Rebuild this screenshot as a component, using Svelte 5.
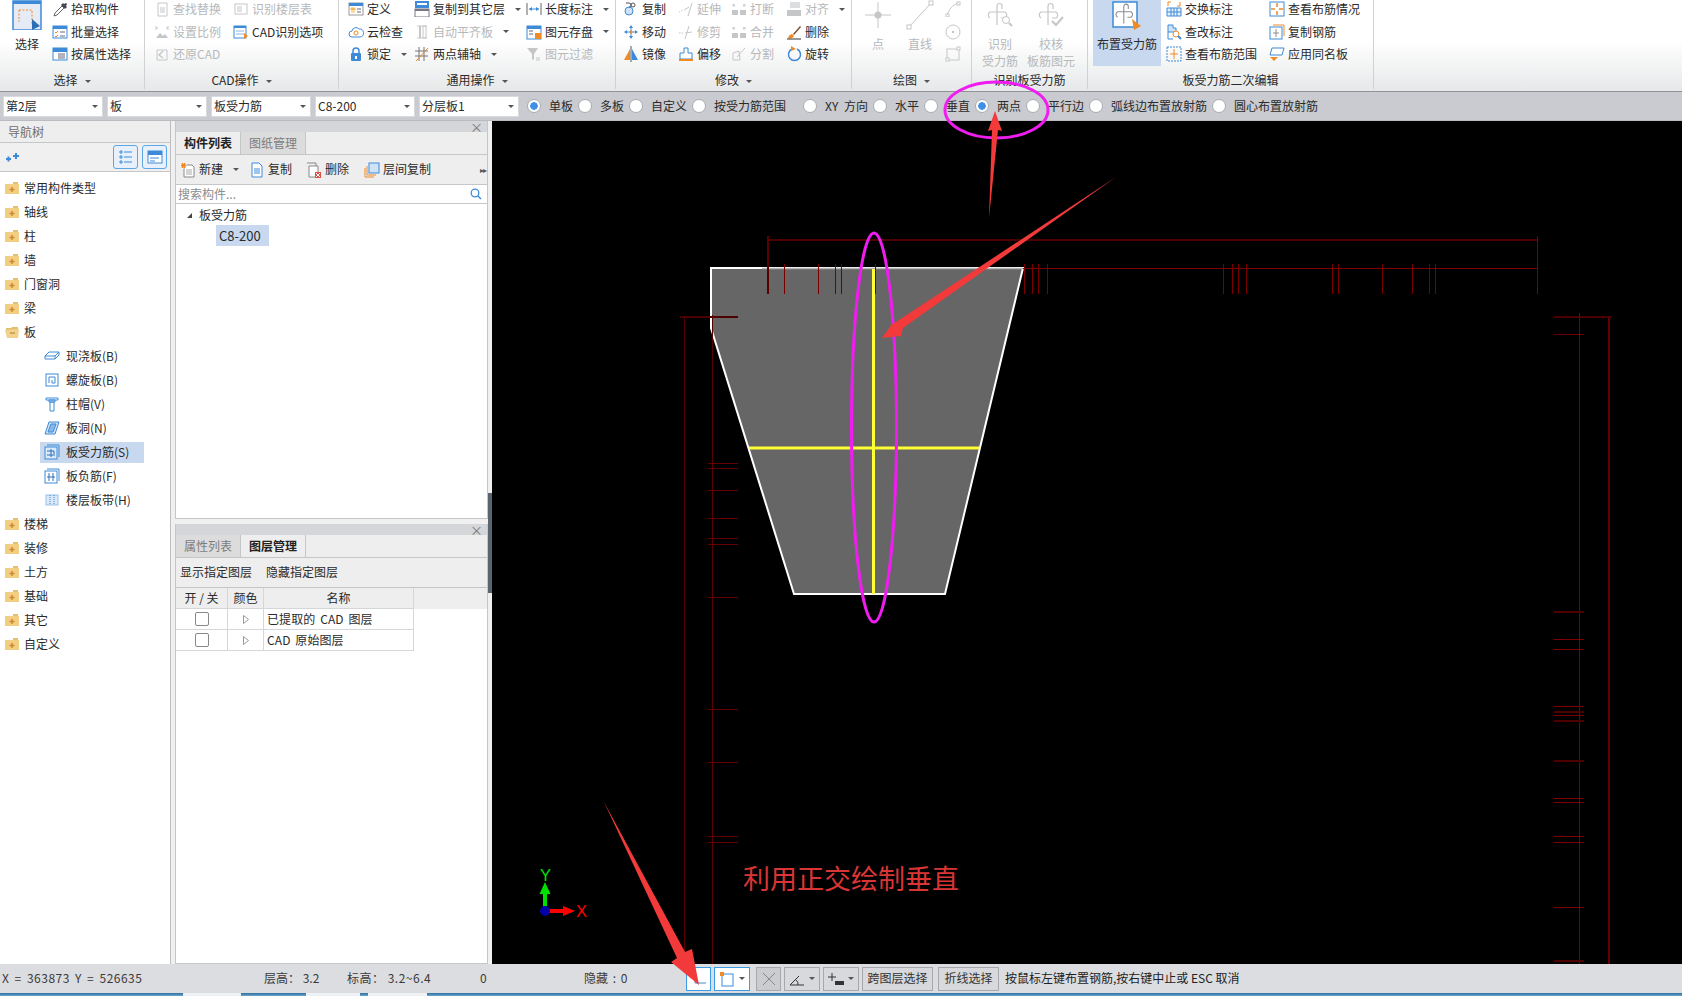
<script>
	// small ribbon / panel icons, all on a 16x16 box unless the caller sizes them up
	const blue = '#3d8bd8';
	const org = '#f08a24';
	const dis = '#c4c6c8';
	const rebarCross = (c) =>
		`<path d="M12 25V6a2.500 2.500 0 0 1 5 0v3M5 18a3.500 3.500 0 0 1 0-6h15a3.500 3.500 0 0 1 0 6h-4" fill="none" stroke="${c}" stroke-width="1.200"/>`;
	const icons = {
		select: `<rect x="1" y="1" width="28" height="29" fill="#e6ebf5" stroke="${blue}" stroke-width="1.5"/><rect x="1" y="1" width="28" height="3" fill="${blue}"/><path d="M7 10h13v14M7 10v12" fill="none" stroke="${org}" stroke-dasharray="2 1.5"/><path d="M20 19l8 7-8 4z" fill="#2d6fb5"/>`,
		pick: `<path d="M2 15l1-3 7-7 2 2-7 7z" fill="#fff" stroke="#666"/><path d="M9 4l2-2 1 1 2-1 1 1-1 2 1 1-2 2z" fill="#445"/>`,
		batch: `<rect x="1" y="2" width="14" height="12" fill="#fff" stroke="${blue}"/><rect x="1" y="2" width="14" height="3" fill="${blue}"/><path d="M3 8l1 1 2-2M3 12l1 1 2-2" fill="none" stroke="${org}"/><path d="M8 8h5M8 12h5" stroke="#667"/>`,
		attr: `<rect x="1" y="2" width="14" height="12" fill="#fff" stroke="${blue}"/><rect x="1" y="2" width="14" height="4" fill="${blue}"/><path d="M6 8h7M6 10h7M6 12h7" stroke="#667"/>`,
		find: `<path d="M4 2h9v13H4z" fill="none" stroke="${dis}"/><path d="M6 7h5M6 9h5M6 11h5" stroke="${dis}"/>`,
		scale: `<path d="M2 4h2M12 4h2M2 2v4M14 2v4" stroke="${dis}"/><path d="M2 14l4-5 3 3 2-2 3 4z" fill="${dis}"/>`,
		restore: `<path d="M3 4h10v10H3z" fill="none" stroke="${dis}"/><path d="M9 5L5 9l4 3" fill="none" stroke="${dis}" stroke-width="1.5"/>`,
		floor: `<rect x="2" y="3" width="12" height="10" fill="none" stroke="${dis}"/><path d="M4 6h5M4 8h5M4 10h5" stroke="${dis}"/>`,
		cadopt: `<rect x="1" y="2" width="12" height="12" fill="#fff" stroke="${blue}"/><rect x="1" y="2" width="12" height="2" fill="${blue}"/><path d="M3 7h8M3 10h8" stroke="#8ab4e0"/><path d="M11 9l4 3-4 3z" fill="${org}"/>`,
		define: `<rect x="1" y="2" width="14" height="12" fill="#fff" stroke="#999"/><rect x="1" y="2" width="14" height="3" fill="${blue}"/><path d="M3 7h4v2H3zM3 11h4" fill="#f4b85a" stroke="#f4b85a"/><path d="M9 8h4M9 11h4" stroke="#667"/>`,
		cloud: `<path d="M4 13a3 3 0 0 1 0-6 4 4 0 0 1 7-2 4 4 0 0 1 1 8z" fill="#fff" stroke="${blue}"/><circle cx="8" cy="9" r="2" fill="none" stroke="${org}"/>`,
		lock: `<path d="M5 7V5a3 3 0 0 1 6 0v2" fill="none" stroke="${blue}" stroke-width="1.5"/><rect x="3" y="7" width="10" height="8" rx="1" fill="${blue}"/><rect x="7" y="10" width="2" height="3" fill="#fff"/>`,
		copyto: `<rect x="1" y="0" width="14" height="7" fill="${blue}"/><rect x="3" y="2" width="10" height="2" fill="#fff"/><rect x="1" y="8" width="14" height="8" fill="#fff" stroke="#778"/><rect x="1" y="8" width="14" height="2" fill="#778"/>`,
		align: `<path d="M3 2h10M3 14h10" stroke="${dis}"/><rect x="5" y="2" width="2" height="12" fill="${dis}"/><rect x="9" y="2" width="3" height="12" fill="none" stroke="${dis}"/>`,
		axis: `<path d="M1 5h13M1 10h13M5 1v14M10 1v14" stroke="#777"/><path d="M2 15L14 2" stroke="${org}"/>`,
		dim: `<path d="M1 2v12M15 2v12" stroke="#666"/><path d="M3 8h10" stroke="${blue}"/><path d="M3 8l3-2v4zM13 8l-3-2v4z" fill="${blue}"/>`,
		save: `<rect x="1" y="2" width="14" height="13" fill="#fff" stroke="${blue}"/><rect x="1" y="2" width="14" height="3" fill="${blue}"/><path d="M3 7h4M3 10h4" stroke="#667"/><rect x="9" y="9" width="6" height="6" fill="${org}"/>`,
		filter: `<path d="M1 2h11L8 8v6l-2-1V8z" fill="${dis}"/><path d="M10 12h4M10 14h4" stroke="${dis}"/>`,
		copy: `<circle cx="6" cy="10" r="4" fill="#cfe2f6" stroke="${blue}"/><path d="M3 2h3a2 2 0 0 1 0 4" fill="none" stroke="#555"/><circle cx="10" cy="4" r="2" fill="none" stroke="#555"/>`,
		move: `<path d="M8 1l2 3H6zM8 15l2-3H6zM1 8l3-2v4zM15 8l-3-2v4z" fill="${blue}"/><path d="M8 3v10M3 8h10" stroke="${blue}"/><circle cx="8" cy="8" r="1.5" fill="${org}"/>`,
		mirror: `<path d="M7 3v11H1z" fill="${org}"/><path d="M9 3v11h6z" fill="${blue}"/><path d="M8 0v16" stroke="#555"/>`,
		offset: `<path d="M6 2h4v5h4v6H2V7h4z" fill="#fff" stroke="${blue}"/><path d="M1 14h14" stroke="${org}" stroke-width="2"/>`,
		extend: `<path d="M1 11l4-2" stroke="${dis}" stroke-dasharray="1 1"/><path d="M6 9l5-3M14 2L10 15" stroke="${dis}"/>`,
		trim: `<path d="M1 9h5" stroke="${dis}" stroke-dasharray="1.5 1"/><path d="M7 9l7-1M11 2L7 15" stroke="${dis}"/>`,
		split: `<path d="M3 3v3M13 3v3M1 4h3M12 4h3" stroke="${dis}"/><rect x="1" y="9" width="6" height="5" fill="${dis}"/><rect x="9" y="9" width="6" height="5" fill="${dis}"/>`,
		cut: `<path d="M2 14V7l6-2 1 9z" fill="none" stroke="${dis}"/><path d="M6 11l8-9" stroke="${dis}"/>`,
		alignr: `<rect x="4" y="1" width="10" height="6" fill="${dis}" opacity=".6"/><rect x="1" y="9" width="14" height="6" fill="${dis}"/>`,
		erase: `<path d="M2 14c1-3 3-4 4-4l2 2c-1 2-3 3-6 2z" fill="${org}"/><path d="M7 10l7-8 1 1-7 8z" fill="#7a4a22"/><path d="M1 15h14" stroke="#333"/>`,
		rotate: `<path d="M6 3a6 6 0 1 0 5 0" fill="none" stroke="${blue}" stroke-width="1.5"/><path d="M5 0l5 3-5 2z" fill="${org}"/>`,
		point: `<path d="M15 2v26M2 15h26" stroke="${dis}"/><circle cx="15" cy="15" r="3.5" fill="${dis}"/>`,
		line: `<path d="M4 27L26 3" stroke="${dis}"/><rect x="2" y="25" width="4" height="4" fill="#fff" stroke="${dis}"/><rect x="24" y="1" width="4" height="4" fill="#fff" stroke="${dis}"/>`,
		arc: `<path d="M2 15C4 8 7 4 14 2" fill="none" stroke="${dis}"/><rect x="1" y="13" width="3" height="3" fill="#fff" stroke="${dis}"/><rect x="12" y="1" width="3" height="3" fill="#fff" stroke="${dis}"/>`,
		circle: `<circle cx="8" cy="8" r="7" fill="none" stroke="${dis}"/><circle cx="8" cy="8" r="1.2" fill="${dis}"/>`,
		rect: `<rect x="2" y="3" width="12" height="11" fill="none" stroke="${dis}"/><rect x="12" y="1" width="3" height="3" fill="#fff" stroke="${dis}"/><rect x="1" y="12" width="3" height="3" fill="#fff" stroke="${dis}"/>`,
		identify: `${rebarCross(dis)}<circle cx="21" cy="20" r="3.500" fill="#fff" stroke="${dis}"/><path d="M24 23l3 3" stroke="${dis}" stroke-width="2"/>`,
		verify: `${rebarCross(dis)}<path d="M16 21l4 4 7-8" fill="none" stroke="${dis}" stroke-width="2"/>`,
		place: `<rect x="1" y="2" width="24" height="25" fill="#fff" stroke="${blue}" stroke-width="1.5"/><g transform="translate(1 1) scale(.9)">${rebarCross('#8a8f95')}</g><path d="M20 19l9 7-7 4z" fill="${org}"/>`,
		swap: `<path d="M1 7h14v8H1zM1 11h14M5 7v8M8 7v8M11 7v8" fill="#e6f0fb" stroke="${blue}"/><path d="M2 5V1h3M14 1v4h-3" fill="none" stroke="${org}"/>`,
		check: `<path d="M2 1h5v3h3v4H2z" fill="#cfe2f6" stroke="${blue}"/><path d="M2 8v7h5" fill="none" stroke="${blue}"/><circle cx="10" cy="10" r="3" fill="#fff" stroke="${org}"/><path d="M12 12l3 3" stroke="${blue}" stroke-width="2"/>`,
		range: `<rect x="1" y="1" width="14" height="14" fill="none" stroke="${blue}" stroke-dasharray="2 1"/><path d="M8 3v10M4 8h8" stroke="${org}"/>`,
		status: `<rect x="1" y="1" width="14" height="14" fill="#fff" stroke="${blue}"/><path d="M8 2v4M8 10v4M2 8h4M10 8h4" stroke="${org}" stroke-width="1.5"/>`,
		copybar: `<path d="M4 1h11v11" fill="none" stroke="${org}"/><rect x="1" y="3" width="12" height="12" fill="#fff" stroke="${blue}"/><path d="M7 5v8M4 9h6" stroke="#8a8f95"/>`,
		apply: `<path d="M3 2h12l-2 7H1z" fill="#fff" stroke="${blue}"/><path d="M1 11h8l-4 4z" fill="${org}"/>`,
		newdoc: `<path d="M4 3h8l2 2v10H4z" fill="#fff" stroke="#888"/><path d="M6 8h6M6 10h6M6 12h6" stroke="#aaa"/><rect x="1" y="1" width="5" height="5" fill="${org}" stroke="#fff" stroke-dasharray="1 1"/>`,
		copydoc: `<path d="M3 1h7l3 3v11H3z" fill="#fff" stroke="${blue}"/><path d="M5 7h6M5 9h6M5 11h6" stroke="${blue}"/>`,
		deldoc: `<path d="M1 1h9v3" fill="none" stroke="#888"/><path d="M3 4h9v11H3z" fill="#fff" stroke="#888"/><rect x="9" y="10" width="6" height="6" fill="#e05040"/><path d="M10 11l4 4M14 11l-4 4" stroke="#fff"/>`,
		floorcopy: `<path d="M1 6v9h9" fill="none" stroke="${org}"/><path d="M3 4v9h9" fill="none" stroke="${org}"/><rect x="5" y="1" width="10" height="10" fill="#cfe2f6" stroke="${blue}"/>`,
		slab: `<path d="M1 8l4-4h10v3l-4 4H1z" fill="#fff" stroke="${blue}"/><path d="M1 8h10l4-4M11 8v3" fill="none" stroke="${blue}"/>`,
		spiral: `<rect x="2" y="2" width="12" height="12" fill="#fff" stroke="${blue}"/><path d="M5 11V5h6v6H8V8" fill="none" stroke="${blue}"/>`,
		cap: `<path d="M2 2h12v2H2zM5 4h6v2H5zM6 6h4v9H6z" fill="#fff" stroke="${blue}"/>`,
		hole: `<path d="M5 2h10l-4 12H1z" fill="#cfe2f6" stroke="${blue}"/><path d="M7 4h5l-3 8H4z" fill="#8db8e6" stroke="${blue}"/>`,
		rebar: `<rect x="1" y="3" width="12" height="12" fill="#dbe9f8" stroke="${blue}"/><path d="M3 1h12v12" fill="none" stroke="${blue}"/><path d="M3 7h7v5M3 11h6M7 5v8" fill="none" stroke="#2d6fb5"/>`,
		neg: `<rect x="1" y="3" width="12" height="12" fill="#fff" stroke="${blue}"/><path d="M3 1h12v12" fill="none" stroke="${blue}"/><path d="M3 9h8M5 5v4M9 5v4M5 9v4M9 9v4" fill="none" stroke="#2d6fb5"/>`,
		band: `<rect x="2" y="3" width="12" height="10" fill="#dbe9f8" stroke="#9cc0e6"/><path d="M6 3v10M10 3v10" stroke="${blue}" stroke-dasharray="1 1"/>`,
		ortho: `<path d="M4 1v11h11" fill="none" stroke="${blue}"/>`,
		snap: `<rect x="3" y="3" width="11" height="12" fill="#fff" stroke="${blue}"/><rect x="1" y="1" width="4" height="4" fill="${org}"/>`,
		cross: `<path d="M2 2l12 12M14 2L2 14" stroke="#888"/>`,
		angle: `<path d="M1 14h14M1 14l9-9" stroke="#333"/><path d="M7 9a5 5 0 0 1 2 5" fill="none" stroke="#333"/>`,
		dash: `<path d="M4 2v8M0 6h8" stroke="#333"/><rect x="7" y="10" width="9" height="4" fill="#333"/>`
	};

	const S = (text, icon, extra = {}) => ({ text, icon, ...extra });
	const off = (text, icon, extra = {}) => ({ text, icon, disabled: true, ...extra });

	// every column is either a spacer, a stack of small items, or one big button
	const groups = [
		{
			label: '选择', w: 145, caret: true,
			cols: [
				{ w: 9 },
				{ w: 36, big: S(['选择'], 'select') },
				{ w: 7 },
				{ w: 92, items: [S('拾取构件', 'pick'), S('批量选择', 'batch'), S('按属性选择', 'attr')] }
			]
		},
		{
			label: 'CAD操作', w: 194, caret: true,
			cols: [
				{ w: 9 },
				{ w: 79, items: [off('查找替换', 'find'), off('设置比例', 'scale'), off('还原CAD', 'restore')] },
				{ w: 105, items: [off('识别楼层表', 'floor'), S('CAD识别选项', 'cadopt')] }
			]
		},
		{
			label: '通用操作', w: 277, caret: true,
			cols: [
				{ w: 9 },
				{ w: 66, items: [S('定义', 'define'), S('云检查', 'cloud'), S('锁定', 'lock', { caret: true })] },
				{
					w: 112,
					items: [
						S('复制到其它层', 'copyto', { caret: true }),
						off('自动平齐板', 'align', { caret: true }),
						S('两点辅轴', 'axis', { caret: true })
					]
				},
				{
					w: 89,
					items: [S('长度标注', 'dim', { caret: true }), S('图元存盘', 'save', { caret: true }), off('图元过滤', 'filter')]
				}
			]
		},
		{
			label: '修改', w: 236, caret: true,
			cols: [
				{ w: 7 },
				{ w: 55, items: [S('复制', 'copy'), S('移动', 'move'), S('镜像', 'mirror')] },
				{ w: 53, items: [off('延伸', 'extend'), off('修剪', 'trim'), S('偏移', 'offset')] },
				{ w: 55, items: [off('打断', 'split'), off('合并', 'split'), off('分割', 'cut')] },
				{ w: 65, items: [off('对齐', 'alignr', { caret: true }), S('删除', 'erase'), S('旋转', 'rotate')] }
			]
		},
		{
			label: '绘图', w: 120, caret: true,
			cols: [
				{ w: 11 },
				{ w: 30, big: off(['点'], 'point') },
				{ w: 12 },
				{ w: 30, big: off(['直线'], 'line') },
				{ w: 10 },
				{ w: 20, items: [off('', 'arc'), off('', 'circle'), off('', 'rect')] }
			]
		},
		{
			label: '识别板受力筋', w: 116,
			cols: [
				{ w: 8 },
				{ w: 40, big: off(['识别', '受力筋'], 'identify') },
				{ w: 7 },
				{ w: 48, big: off(['校核', '板筋图元'], 'verify') }
			]
		},
		{
			label: '板受力筋二次编辑', w: 286,
			cols: [
				{ w: 5 },
				{ w: 68, big: S(['布置受力筋'], 'place', { active: true }) },
				{ w: 5 },
				{ w: 103, items: [S('交换标注', 'swap'), S('查改标注', 'check'), S('查看布筋范围', 'range')] },
				{ w: 100, items: [S('查看布筋情况', 'status'), S('复制钢筋', 'copybar'), S('应用同名板', 'apply')] }
			]
		}
	];

	const combos = ['第2层', '板', '板受力筋', 'C8-200', '分层板1'];
	const modes = [
		{ text: '单板', on: true },
		{ text: '多板' },
		{ text: '自定义' },
		{ text: '按受力筋范围', sep: true }
	];
	const draws = [
		{ text: 'XY 方向', spaced: true },
		{ text: '水平' },
		{ text: '垂直' },
		{ text: '两点', on: true },
		{ text: '平行边' },
		{ text: '弧线边布置放射筋' },
		{ text: '圆心布置放射筋' }
	];

	const tree = [
		{ text: '常用构件类型' },
		{ text: '轴线' },
		{ text: '柱' },
		{ text: '墙' },
		{ text: '门窗洞' },
		{ text: '梁' },
		{
			text: '板',
			open: true,
			kids: [
				{ text: '现浇板(B)', icon: 'slab' },
				{ text: '螺旋板(B)', icon: 'spiral' },
				{ text: '柱帽(V)', icon: 'cap' },
				{ text: '板洞(N)', icon: 'hole' },
				{ text: '板受力筋(S)', icon: 'rebar', sel: true },
				{ text: '板负筋(F)', icon: 'neg' },
				{ text: '楼层板带(H)', icon: 'band' }
			]
		},
		{ text: '楼梯' },
		{ text: '装修' },
		{ text: '土方' },
		{ text: '基础' },
		{ text: '其它' },
		{ text: '自定义' }
	];

	// CAD dimension geometry, page coordinates (the svg viewBox starts at 492,120)
	const topTicks = [784, 818, 835, 841, 875, 1024, 1032, 1038, 1047, 1223, 1232, 1238, 1246, 1332, 1338, 1382, 1412, 1429, 1435];
	const leftStubs = [462, 467, 489, 517, 537, 543, 596, 708, 761, 835, 841];
	const rightStubs = [638, 648, 705, 714, 797, 801, 835, 841, 906];
	const rightDim = [610, 710, 719, 759, 959];
</script>

{#snippet icon(name, size = 16)}
	<svg class="ico" width={size} height={size} viewBox="0 0 {size} {size}">{@html icons[name]}</svg>
{/snippet}

{#snippet caret()}
	<i class="caret"></i>
{/snippet}

{#snippet folder(open)}
	<svg class="ico" width="15" height="14" viewBox="0 0 15 14">
		{#if open}
			<path d="M1 3h5l1-1h6v3H1z" fill="#e2c070" />
			<path d="M0 5l14-1-1 9H2z" fill="#f0d28c" />
			<path d="M5 8h5" stroke="#c9963c" stroke-width="1.5" />
		{:else}
			<path d="M8 1h5v2H8z" fill="#e2c070" />
			<rect x="0" y="3" width="14" height="10" fill="#f0cf85" />
			<path d="M7 6v5M4.5 8.500h5" stroke="#d08a2c" stroke-width="1.5" />
		{/if}
	</svg>
{/snippet}

<div class="app">
	<header class="ribbon">
		{#each groups as g}
			<section class="group" style="width:{g.w}px">
				<div class="group-body">
					{#each g.cols as col}
						<div class="col" style="width:{col.w}px">
							{#if col.big}
								<div class="big" class:off={col.big.disabled} class:active={col.big.active}>
									{@render icon(col.big.icon, 30)}
									<div class="big-text">
										{#each col.big.text as line}
											<span>{line}</span>
										{/each}
									</div>
								</div>
							{:else if col.items}
								{#each col.items as item}
									<div class="item" class:off={item.disabled}>
										{@render icon(item.icon)}
										{#if item.text}<span>{item.text}</span>{/if}
										{#if item.caret}{@render caret()}{/if}
									</div>
								{/each}
							{/if}
						</div>
					{/each}
				</div>
				<div class="group-label">{g.label}{#if g.caret}{@render caret()}{/if}</div>
			</section>
		{/each}
	</header>

	<div class="options">
		{#each combos as c}
			<div class="combo"><span>{c}</span>{@render caret()}</div>
		{/each}
		<div class="radios">
			{#each modes as m}
				<label class="radio" class:sep={m.sep}><input type="radio" name="mode" checked={m.on} />{m.text}</label>
			{/each}
			{#each draws as d}
				<label class="radio" class:spaced={d.spaced}><input type="radio" name="draw" checked={d.on} />{d.text}</label>
			{/each}
		</div>
	</div>

	<main class="main">
		<aside class="nav">
			<div class="nav-head">导航树</div>
			<div class="nav-tools">
				<svg class="ico pin" width="14" height="12" viewBox="0 0 14 12">
					<path d="M0 8h5M2.500 5.500v5M7 5h6M10 2v6" stroke="#3d8bd8" stroke-width="2" />
				</svg>
				<button class="toggle" aria-label="列表">
					<svg width="14" height="14" viewBox="0 0 14 14">
						<path d="M5 2h8M5 7h8M5 12h8M1 1h2v2H1zM1 6h2v2H1zM1 11h2v2H1z" fill="none" stroke="#3d8bd8" />
					</svg>
				</button>
				<button class="toggle" aria-label="视图">
					<svg width="16" height="14" viewBox="0 0 16 14">
						<rect x="1" y="1" width="14" height="12" fill="#fff" stroke="#3d8bd8" />
						<rect x="1" y="1" width="14" height="4" fill="#3d8bd8" />
						<path d="M3 8h9M3 11h5" stroke="#3d8bd8" />
					</svg>
				</button>
			</div>
			<ul class="tree">
				{#each tree as node}
					<li class="node">{@render folder(node.open)}<span>{node.text}</span></li>
					{#if node.kids}
						{#each node.kids as kid}
							<li class="kid">
								<div class="kid-in" class:sel={kid.sel}>{@render icon(kid.icon)}<span>{kid.text}</span></div>
							</li>
						{/each}
					{/if}
				{/each}
			</ul>
		</aside>

		<div class="docks">
			<section class="dock list-dock">
				<div class="dock-strip"><span class="close">×</span></div>
				<div class="tabs">
					<span class="tab on">构件列表</span>
					<span class="tab">图纸管理</span>
				</div>
				<div class="dock-tools">
					<span class="tool new">{@render icon('newdoc')}新建{@render caret()}</span>
					<span class="tool copy">{@render icon('copydoc')}复制</span>
					<span class="tool del">{@render icon('deldoc')}删除</span>
					<span class="tool">{@render icon('floorcopy')}层间复制</span>
					<span class="more">▸▸</span>
				</div>
				<div class="search">
					<span>搜索构件...</span>
					<svg width="12" height="12" viewBox="0 0 12 12">
						<circle cx="5" cy="5" r="3.800" fill="none" stroke="#3d8bd8" stroke-width="1.300" />
						<path d="M8 8l3 3" stroke="#3d8bd8" stroke-width="1.500" />
					</svg>
				</div>
				<div class="parts">
					<div class="part-head"><i class="tri"></i>板受力筋</div>
					<div class="part-row">C8-200</div>
				</div>
			</section>

			<section class="dock layer-dock">
				<div class="dock-strip"><span class="close">×</span></div>
				<div class="tabs">
					<span class="tab">属性列表</span>
					<span class="tab on">图层管理</span>
				</div>
				<div class="dock-tools layer-tools">
					<span>显示指定图层</span>
					<span>隐藏指定图层</span>
				</div>
				<div class="layer-wrap">
					<table class="layers">
						<thead>
							<tr><th class="c1">开 / 关</th><th class="c2">颜色</th><th>名称</th></tr>
						</thead>
						<tbody>
							<tr>
								<td><input type="checkbox" /></td>
								<td>
									<svg class="play" width="6" height="9" viewBox="0 0 6 9"><path d="M.5.500l5 4-5 4z" fill="none" stroke="#999" /></svg>
								</td>
								<td class="name">已提取的 CAD 图层</td>
							</tr>
							<tr>
								<td><input type="checkbox" /></td>
								<td>
									<svg class="play" width="6" height="9" viewBox="0 0 6 9"><path d="M.5.500l5 4-5 4z" fill="none" stroke="#999" /></svg>
								</td>
								<td class="name">CAD 原始图层</td>
							</tr>
						</tbody>
					</table>
				</div>
			</section>
		</div>

		<div class="splitter"><i></i></div>

		<div class="canvas">
			<svg width="1190" height="843" viewBox="492 120 1190 843">
				<polygon points="711,267 1023,267 945,593 794,593 711,327" fill="#666" stroke="#fff" stroke-width="2" />
				<path d="M762 267.500H1023" stroke="#b5b5b5" stroke-width="1.500" />

				<g shape-rendering="crispEdges" fill="none">
					<path d="M767 239H1537" stroke="#4d0000" stroke-width="2" />
					<path d="M1023 267.500H1537" stroke="#800000" />
					<path d="M767.500 235V293" stroke="#5a0000" stroke-width="2" />
					<path d="M1537.500 235V293" stroke="#800000" />
					{#each topTicks as x}
						<path d="M{x + 0.5} 263V293" stroke="#7a0000" />
					{/each}
					<path d="M680 316H738" stroke="#4d0000" stroke-width="2" />
					<path d="M684.500 316V963" stroke="#5a0000" />
					<path d="M712.500 314V963" stroke="#5a0000" />
					{#each leftStubs as y}
						<path d="M708 {y + 0.5}H738" stroke="#660000" />
					{/each}
					<path d="M1554 316H1612" stroke="#4d0000" stroke-width="2" />
					<path d="M1554 333.500H1584" stroke="#6a0000" />
					<path d="M1579.500 312V963" stroke="#800000" />
					<path d="M1608.500 316V963" stroke="#660000" stroke-width="2" />
					{#each rightStubs as y}
						<path d="M1554 {y + 0.5}H1584" stroke="#800000" />
					{/each}
					{#each rightDim as y}
						<path d="M1554 {y + 0.5}H1584" stroke="#4d0000" stroke-width="2" />
					{/each}
				</g>

				<path d="M873.500 268V593" stroke="#ffff33" stroke-width="3" />
				<path d="M749 447H979" stroke="#ffff33" stroke-width="3" />

				<path d="M545 910V890" stroke="#00e000" stroke-width="4" />
				<path d="M545 881l5.500 12h-11z" fill="#00e000" />
				<path d="M545 910h19" stroke="#f00" stroke-width="4" />
				<path d="M575 910l-12 5v-10z" fill="#f00" />
				<circle cx="545" cy="910" r="5" fill="#0000a8" />
				<text class="axis-y" x="540" y="880">Y</text>
				<text class="axis-x" x="576" y="916">X</text>

				<text class="note" x="743" y="888">利用正交绘制垂直</text>
			</svg>
		</div>
	</main>

	<footer class="status">
		<span class="s-coord">X = 363873 Y = 526635</span>
		<span class="s-floor">层高： 3.2</span>
		<span class="s-elev">标高： 3.2~6.4</span>
		<span class="s-zero">0</span>
		<span class="s-hide">隐藏 : 0</span>
		<button class="sb on w25" aria-label="正交">{@render icon('ortho')}</button>
		<button class="sb on w36" aria-label="捕捉">{@render icon('snap')}{@render caret()}</button>
		<button class="sb dim w25" aria-label="交点">{@render icon('cross')}</button>
		<button class="sb w36" aria-label="角度">{@render icon('angle')}{@render caret()}</button>
		<button class="sb w36" aria-label="线宽">{@render icon('dash')}{@render caret()}</button>
		<button class="sb w71">跨图层选择</button>
		<button class="sb w61">折线选择</button>
		<span class="s-hint">按鼠标左键布置钢筋,按右键中止或 ESC 取消</span>
	</footer>
	<div class="taskbar"><i class="t1"></i><i class="t2"></i><i class="t3"></i></div>

	<!-- hand-drawn annotations lying over the whole window -->
	<svg class="marks" width="1682" height="996" viewBox="0 0 1682 996">
		<ellipse cx="874" cy="427.500" rx="22.500" ry="194.500" fill="none" stroke="#f01df0" stroke-width="3" />
		<ellipse cx="996.500" cy="110" rx="51.500" ry="28" fill="none" stroke="#f01df0" stroke-width="3" />
		<polygon points="1116,177 903,328 901,336 882,338 892,324 896,322" fill="#f33a3a" />
		<polygon points="995,111 1002,131 998,130 989,218 992,130 988,131" fill="#f33a3a" />
		<polygon points="604,802 685,952 692,949 699,985 671,962 677,958" fill="#f33a3a" />
	</svg>
</div>

<style>
	:global(body) {
		margin: 0;
		overflow: hidden;
		background: #f0f0f0;
	}

	.app {
		position: relative;
		display: flex;
		flex-direction: column;
		width: 1682px;
		height: 996px;
		overflow: hidden;
		font: 12px/1.2 'Noto Sans CJK SC', 'Noto Sans', sans-serif;
		color: #2a2a2a;
	}

	.ico {
		flex: none;
		display: block;
	}

	.caret {
		display: inline-block;
		flex: none;
		width: 0;
		height: 0;
		margin-left: 7px;
		border-left: 3px solid transparent;
		border-right: 3px solid transparent;
		border-top: 3px solid #555;
		vertical-align: middle;
	}

	/* ribbon */
	.ribbon {
		display: flex;
		flex: none;
		height: 92px;
		box-sizing: border-box;
		border-bottom: 1px solid #8f9398;
		background: linear-gradient(#fff 45%, #e6e8e9);
		overflow: hidden;
	}

	.group {
		flex: none;
		display: flex;
		flex-direction: column;
		box-sizing: border-box;
		height: 89px;
		border-right: 1px solid #cfd1d3;
	}

	.group-body {
		display: flex;
		height: 70px;
		margin-top: -2px;
		margin-bottom: 3px;
	}

	.col {
		flex: none;
		display: flex;
		flex-direction: column;
	}

	.item {
		display: flex;
		align-items: center;
		gap: 3px;
		height: 22.500px;
		white-space: nowrap;
	}

	.off {
		color: #b6b8ba;
	}

	.big {
		display: flex;
		flex-direction: column;
		align-items: center;
		height: 68px;
		padding-top: 2px;
		box-sizing: border-box;
		white-space: nowrap;
	}

	.big.active {
		background: #c8d8ef;
	}

	.big-text {
		display: flex;
		flex-direction: column;
		align-items: center;
		margin-top: 5px;
		line-height: 17px;
	}

	.group-label {
		height: 18px;
		line-height: 18px;
		text-align: center;
		white-space: nowrap;
	}

	/* option bar */
	.options {
		display: flex;
		flex: none;
		align-items: center;
		gap: 4px;
		height: 29px;
		padding: 0 0 0 3px;
		box-sizing: border-box;
		background: #c9cbd0;
		border-bottom: 1px solid #b9bbc0;
	}

	.combo {
		display: flex;
		align-items: center;
		justify-content: space-between;
		box-sizing: border-box;
		width: 100px;
		height: 21px;
		margin-top: 1px;
		padding: 0 4px 0 2px;
		background: #fff;
		border: 1px solid #d8dadd;
	}

	.radios {
		display: flex;
		align-items: center;
		margin-left: 4px;
		margin-top: 1px;
	}

	.radio {
		display: flex;
		align-items: center;
		gap: 8px;
		margin-right: 5px;
		white-space: nowrap;
	}

	.radio.sep {
		margin-right: 17px;
	}

	.radio.spaced {
		word-spacing: 3px;
	}

	.radio input {
		appearance: none;
		flex: none;
		width: 14px;
		height: 14px;
		margin: 0;
		border: 1px solid #a9acb1;
		border-radius: 50%;
		background: #fff;
	}

	.radio input:checked {
		background: radial-gradient(circle, #3d8fe8 0 3.500px, #fff 4px);
	}

	/* main row */
	.main {
		display: flex;
		flex: none;
		height: 843px;
	}

	.nav {
		flex: none;
		display: flex;
		flex-direction: column;
		width: 171px;
		box-sizing: border-box;
		background: #fff;
		border-right: 1px solid #bcbec1;
	}

	.nav-head {
		height: 21px;
		line-height: 21px;
		padding-left: 8px;
		background: #eee;
		color: #6e6e6e;
		border-bottom: 1px solid #c4c6c8;
	}

	.nav-tools {
		display: flex;
		align-items: center;
		gap: 4px;
		height: 28px;
		padding: 0 3px 0 6px;
		background: #f0f0f0;
		border-bottom: 1px solid #c4c6c8;
	}

	.pin {
		margin-right: auto;
	}

	.toggle {
		display: flex;
		align-items: center;
		justify-content: center;
		box-sizing: border-box;
		width: 25px;
		height: 24px;
		padding: 0;
		border: 1px solid #5ba7e6;
		border-radius: 3px;
		background: #e8f1fb;
	}

	.tree {
		list-style: none;
		margin: 0;
		padding: 4px 0 0;
	}

	.node {
		display: flex;
		align-items: center;
		gap: 4px;
		height: 24px;
		padding-left: 5px;
	}

	.kid {
		display: flex;
		align-items: center;
		height: 24px;
		padding-left: 40px;
	}

	.kid-in {
		display: flex;
		align-items: center;
		gap: 6px;
		box-sizing: border-box;
		width: 104px;
		height: 21px;
		padding-left: 4px;
		white-space: nowrap;
	}

	.kid-in.sel {
		background: #c8d8ef;
	}

	.docks {
		flex: none;
		display: flex;
		flex-direction: column;
		gap: 5px;
		width: 313px;
		margin-left: 4px;
	}

	.dock {
		display: flex;
		flex-direction: column;
		box-sizing: border-box;
		background: #fff;
		border: 1px solid #c4c6c8;
		border-top: 0;
	}

	.list-dock {
		height: 398px;
	}

	.layer-dock {
		flex: 1;
		min-height: 0;
	}

	.dock-strip {
		display: flex;
		justify-content: flex-end;
		align-items: center;
		height: 11px;
		padding-right: 4px;
		background: #d4d6d9;
	}

	.close {
		font-size: 13px;
		line-height: 11px;
		color: #777;
	}

	.tabs {
		display: flex;
		height: 22px;
		background: #eee;
		border-bottom: 1px solid #c4c6c8;
	}

	.tab {
		width: 64px;
		line-height: 22px;
		text-align: center;
		background: #dcdcdc;
		color: #7c7c7c;
		border-right: 1px solid #c4c6c8;
	}

	.tab.on {
		background: #eee;
		color: #222;
		font-weight: 700;
	}

	.dock-tools {
		display: flex;
		align-items: center;
		height: 29px;
		padding-left: 4px;
		background: #eee;
		border-bottom: 1px solid #c4c6c8;
		white-space: nowrap;
	}

	.tool {
		display: flex;
		align-items: center;
		gap: 3px;
	}

	.tool.new {
		width: 69px;
	}

	.tool.copy {
		width: 57px;
	}

	.tool.del {
		width: 58px;
	}

	.more {
		margin-left: auto;
		padding-right: 1px;
		font-size: 8px;
		letter-spacing: -1px;
		color: #555;
	}

	.search {
		display: flex;
		align-items: center;
		justify-content: space-between;
		height: 18px;
		padding: 0 5px 0 2px;
		color: #8c8c8c;
		border-bottom: 1px solid #c4c6c8;
	}

	.parts {
		padding-top: 1px;
	}

	.part-head {
		display: flex;
		align-items: center;
		gap: 7px;
		height: 20px;
		padding-left: 11px;
	}

	.tri {
		width: 0;
		height: 0;
		border-left: 5px solid transparent;
		border-bottom: 5px solid #444;
	}

	.part-row {
		box-sizing: border-box;
		width: 53px;
		height: 21px;
		margin-left: 40px;
		padding-left: 3px;
		line-height: 21px;
		font-size: 13px;
		background: #c8d8ef;
	}

	.layer-tools {
		gap: 14px;
	}

	.layer-wrap {
		background: linear-gradient(#eee 21px, #fff 21px);
	}

	.layers {
		width: 238px;
		border-collapse: collapse;
		table-layout: fixed;
	}

	.layers th,
	.layers td {
		height: 20px;
		padding: 0;
		border: 1px solid #d4d6d8;
		border-top: 0;
		font-weight: 400;
		text-align: center;
	}

	.layers th:first-child,
	.layers td:first-child {
		border-left: 0;
	}

	.layers .c1 {
		width: 51px;
	}

	.layers .c2 {
		width: 35px;
	}

	.layers .name {
		padding-left: 3px;
		text-align: left;
		word-spacing: 2px;
		letter-spacing: 0.1px;
	}

	.layers input {
		appearance: none;
		display: block;
		width: 14px;
		height: 14px;
		margin: 0 auto;
		border: 1px solid #888;
		border-radius: 2px;
		background: #fff;
	}

	.play {
		display: block;
		margin: 0 auto;
	}

	.splitter {
		flex: none;
		width: 4px;
		background: #f0f0f0;
	}

	.splitter i {
		display: block;
		width: 4px;
		height: 100px;
		margin-top: 372px;
		background: #5a6470;
	}

	.canvas {
		flex: 1;
		background: #000;
		overflow: hidden;
	}

	.canvas svg {
		display: block;
	}

	.axis-y,
	.axis-x {
		font: 16.500px 'Liberation Sans', sans-serif;
	}

	.axis-y {
		fill: #00e000;
	}

	.axis-x {
		fill: #f00;
	}

	.note {
		font: 27px 'Noto Sans CJK SC', sans-serif;
		fill: #d93535;
	}

	/* status bar */
	.status {
		display: flex;
		flex: none;
		align-items: center;
		height: 29px;
		background: #dcdde0;
		color: #3a3a3a;
		white-space: nowrap;
	}

	.s-coord {
		width: 262px;
		padding-left: 2px;
		letter-spacing: 0.5px;
		word-spacing: 2px;
	}

	.s-floor {
		width: 83px;
	}

	.s-elev {
		width: 133px;
		letter-spacing: 0.5px;
	}

	.s-zero {
		width: 104px;
	}

	.s-hide {
		width: 102px;
		word-spacing: 2px;
	}

	.s-hint {
		margin-left: 6px;
		color: #222;
	}

	.sb {
		display: flex;
		align-items: center;
		justify-content: center;
		box-sizing: border-box;
		height: 24px;
		margin-right: 3px;
		padding: 0;
		border: 1px solid #a6a8ab;
		background: #d8d9dc;
		font: inherit;
		color: #333;
	}

	.sb .caret {
		margin-left: 4px;
	}

	.sb.on {
		border-color: #3c9be8;
		background: #fff;
	}

	.sb.dim {
		background: #cbcccf;
	}

	.w25 {
		width: 25px;
	}

	.w36 {
		width: 36px;
	}

	.w71 {
		width: 71px;
		margin-right: 5px;
	}

	.w61 {
		width: 61px;
		margin-right: 0;
	}

	.sb.on.w36 {
		margin-right: 6px;
	}

	.taskbar {
		display: flex;
		flex: 1;
		background: linear-gradient(#2e6f9e, #6aa4cc);
	}

	.taskbar i {
		height: 100%;
		background: #eef2f5;
	}

	.t1 {
		width: 58px;
		margin-left: 183px;
	}

	.t2 {
		width: 54px;
		margin-left: 65px;
	}

	.t3 {
		width: 59px;
		margin-left: 8px;
	}

	.marks {
		position: absolute;
		left: 0;
		top: 0;
		pointer-events: none;
	}
</style>
